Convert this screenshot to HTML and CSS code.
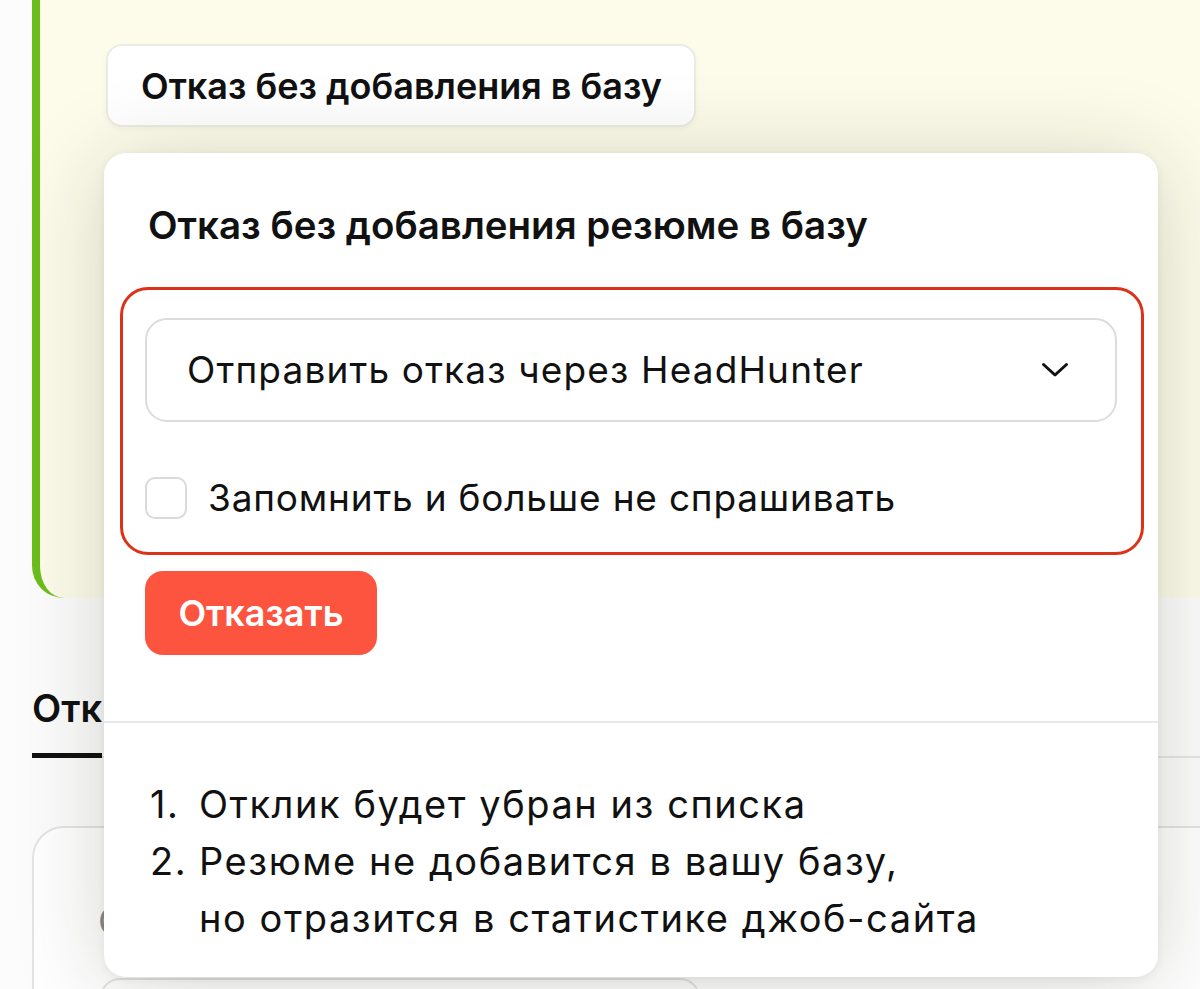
FILE: index.html
```html
<!DOCTYPE html>
<html lang="ru">
<head>
<meta charset="utf-8">
<title>Отказ без добавления в базу</title>
<link rel="stylesheet" href="styles.css">
</head>
<body>
<div class="page">
  <section class="vacancy-card">
    <button class="action-btn" type="button">Отказ без добавления в базу</button>
  </section>

  <nav class="tabs">
    <span class="tab tab-active">Отк</span>
  </nav>

  <section class="response-card">
    <div class="response-text">С</div>
    <div class="response-inner"></div>
  </section>

  <div class="popup">
    <div class="popup-main">
      <h2 class="popup-title">Отказ без добавления резюме в базу</h2>
      <div class="highlight-box">
        <div class="select">
          <span class="select-value">Отправить отказ через HeadHunter</span>
          <svg class="chevron" width="28" height="16" viewBox="0 0 28 16" aria-hidden="true">
            <path d="M2.5 2.5 L14 13 L25.5 2.5" fill="none" stroke="#111" stroke-width="3" stroke-linecap="round" stroke-linejoin="round"/>
          </svg>
        </div>
        <label class="check-row">
          <span class="checkbox"></span>
          <span class="check-label">Запомнить и больше не спрашивать</span>
        </label>
      </div>
      <button class="reject-btn" type="button">Отказать</button>
    </div>
    <div class="popup-info">
      <div class="info-row"><span class="info-num">1.</span><span class="info-text">Отклик будет убран из списка</span></div>
      <div class="info-row"><span class="info-num">2.</span><span class="info-text">Резюме не добавится в вашу базу,<br>но отразится в статистике джоб-сайта</span></div>
    </div>
  </div>
</div>
</body>
</html>
```
FILE: styles.css
```css
* { box-sizing: border-box; }

html, body {
  margin: 0;
  padding: 0;
  width: 1200px;
  height: 989px;
  overflow: hidden;
  background: #ffffff;
  font-family: "Inter", "Noto Sans", sans-serif;
  color: #111111;
}

.page {
  position: relative;
  width: 1200px;
  height: 989px;
  overflow: hidden;
  background: #fcfcfc;
}

.vacancy-card {
  margin: -40px 0 0 32px;
  width: 1220px;
  height: 638px;
  background: #fdfcea;
  border-left: 8px solid #6cbd1c;
  border-radius: 32px;
  padding: 84px 0 0 66px;
}

.action-btn {
  display: flex;
  align-items: center;
  height: 83px;
  padding: 0 32px 0 33px;
  background: #ffffff;
  border: 2px solid #ecebe3;
  border-radius: 16px;
  box-shadow: 0 2px 6px rgba(0, 0, 0, 0.04);
  font-family: inherit;
  font-size: 36px;
  font-weight: 600;
  line-height: 40px;
  color: #111;
}

.tabs {
  margin: 90px 0 0 32px;
  border-bottom: 2px solid #e6e6e6;
  display: flex;
}

.tab {
  font-size: 38px;
  font-weight: 600;
  line-height: 40px;
  padding-bottom: 25px;
  white-space: nowrap;
}

.tab-active {
  border-bottom: 5px solid #111;
  margin-bottom: -2px;
}

.response-card {
  margin: 68px 0 0 32px;
  width: 1220px;
  height: 300px;
  border: 2px solid #e4e4e4;
  border-radius: 32px;
  background: #ffffff;
  padding: 71px 0 0 64px;
}

.response-text {
  font-size: 38px;
  color: #8a8a8a;
  line-height: 44px;
}

.response-inner {
  margin: 35px 0 0 2px;
  height: 80px;
  width: 600px;
  border: 2px solid #e4e4e4;
  border-radius: 20px;
}

.popup {
  position: absolute;
  left: 104px;
  top: 153px;
  width: 1054px;
  height: 824px;
  background: #ffffff;
  border-radius: 22px;
  box-shadow: 0 8px 90px rgba(30, 30, 10, 0.18), 0 2px 10px rgba(0, 0, 0, 0.06);
}

.popup-main {
  padding: 52px 14px 0 16px;
  height: 570px;
  border-bottom: 2px solid #e8e8e8;
}

.popup-title {
  margin: 0 0 42px 28px;
  font-size: 38.5px;
  font-weight: 600;
  line-height: 40px;
}

.highlight-box {
  border: 3px solid #dc3219;
  border-radius: 28px;
  padding: 28px 24px 33px 22px;
}

.select {
  display: flex;
  align-items: center;
  justify-content: space-between;
  height: 104px;
  border: 2px solid #dcdcdc;
  border-radius: 22px;
  padding: 0 46px 0 40px;
}

.select-value {
  font-size: 37px;
  letter-spacing: 1.15px;
  line-height: 40px;
}

.chevron {
  display: block;
}

.check-row {
  display: flex;
  align-items: center;
  gap: 21px;
  margin-top: 55px;
}

.checkbox {
  width: 42px;
  height: 42px;
  border: 2px solid #dadada;
  border-radius: 10px;
  background: #fff;
}

.check-label {
  font-size: 37px;
  letter-spacing: 0.8px;
  line-height: 40px;
}

.reject-btn {
  display: block;
  margin: 16px 0 0 25px;
  width: 232px;
  height: 84px;
  border: none;
  border-radius: 18px;
  background: #fd543f;
  color: #ffffff;
  font-family: inherit;
  font-size: 36px;
  font-weight: 600;
  line-height: 40px;
}

.popup-info {
  padding: 53px 0 0 46px;
}

.info-row {
  display: flex;
  font-size: 38px;
  letter-spacing: 1.55px;
  line-height: 57px;
}

.info-num {
  width: 49px;
  flex: none;
}
```
